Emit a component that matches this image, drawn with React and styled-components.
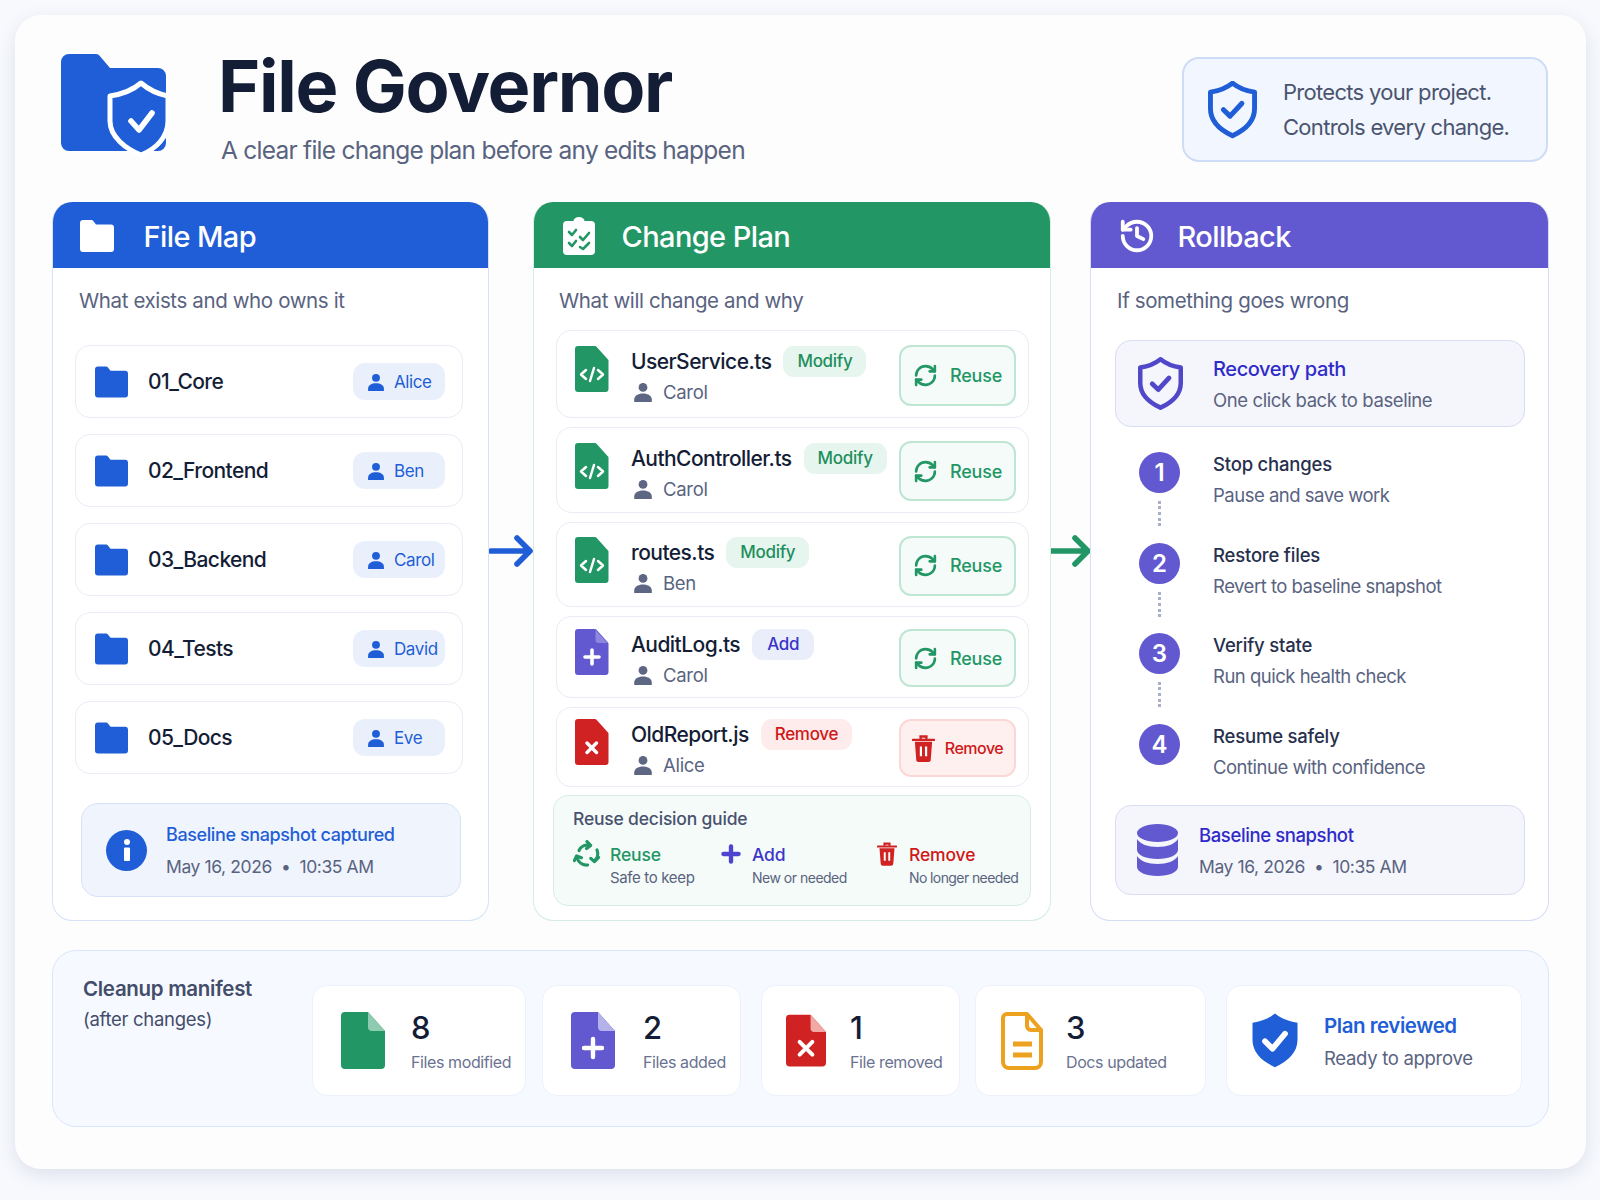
import React from 'react';
import styled, { createGlobalStyle } from 'styled-components';
import { RefreshCw, History, Plus } from 'lucide-react';

const BLUE = '#1f5ed6';
const GREEN = '#229765';
const PURPLE = '#6259d0';
const RED = '#d02222';
const INK = '#141d36';
const GREY = '#59637f';

const Global = createGlobalStyle`
  html, body { margin: 0; padding: 0; }
  body {
    background: #f7f9fd;
    font-family: Inter, "Liberation Sans", sans-serif;
    color: ${INK};
  }
  * { box-sizing: border-box; }
`;

const Page = styled.div`
  width: 1600px;
  height: 1200px;
  padding: 15px 14px 31px 15px;
`;

const Card = styled.div`
  height: 100%;
  background: #fdfdfe;
  border-radius: 26px;
  box-shadow: 0 6px 18px rgba(70, 85, 130, 0.14);
  padding: 38px 37px 0 37px;
`;

const Header = styled.header`
  display: flex;
  height: 149px;
`;

const Logo = styled.svg`
  width: 110px;
  height: 104px;
  margin: 0 0 0 8px;
  flex: none;
  overflow: visible;
`;

const TitleBlock = styled.div`
  margin-left: 48px;
  flex: 1;
`;

const Title = styled.h1`
  margin: 0;
  font-size: 72px;
  line-height: 66px;
  font-weight: 700;
  letter-spacing: -1.3px;
  color: ${INK};
`;

const Subtitle = styled.p`
  margin: 15px 0 0 3px;
  font-size: 24.5px;
  line-height: 32px;
  letter-spacing: -0.75px;
  color: ${GREY};
`;

const Promise = styled.div`
  width: 366px;
  height: 105px;
  margin: 4px 1px 0 0;
  display: flex;
  align-items: center;
  padding-left: 24px;
  gap: 26px;
  background: #f2f6fe;
  border: 2px solid #cfdcf6;
  border-radius: 17px;
  font-size: 22px;
  line-height: 35px;
  letter-spacing: -0.7px;
  color: #4a546f;
`;

const Columns = styled.div`
  display: grid;
  grid-template-columns: 437px 44px 518px 39px 459px;
  height: 719px;
`;

const Panel = styled.section`
  border: 1.5px solid ${(p) => p.$line};
  border-top: none;
  border-radius: 20px;
  overflow: hidden;
  background: #fff;
`;

const PanelHead = styled.div`
  height: 66px;
  margin: 0 -1.5px;
  background: ${(p) => p.$bg};
  color: #fff;
  display: flex;
  align-items: center;
  padding: 2px 0 0 ${(p) => p.$pad}px;
  gap: ${(p) => p.$gap}px;
  font-size: 29px;
  font-weight: 500;
  letter-spacing: -0.6px;
`;

const PanelBody = styled.div`
  padding: 21px ${(p) => p.$right}px 0 ${(p) => p.$left}px;
`;

const Lead = styled.p`
  margin: 0 0 ${(p) => p.$after}px ${(p) => p.$indent}px;
  font-size: 20.5px;
  line-height: 24px;
  letter-spacing: -0.38px;
  color: ${GREY};
`;

const FolderList = styled.div`
  display: flex;
  flex-direction: column;
  gap: 16px;
`;

const FolderRow = styled.div`
  height: 73px;
  display: flex;
  align-items: center;
  padding: 0 17px 0 19px;
  border: 1.5px solid #e9ecf6;
  border-radius: 15px;
`;

const FolderName = styled.span`
  margin-left: 20px;
  font-size: 21px;
  font-weight: 500;
  letter-spacing: -0.6px;
  flex: 1;
`;

const OwnerPill = styled.span`
  width: 92px;
  height: 37px;
  display: flex;
  align-items: center;
  gap: 9px;
  padding-left: 14px;
  background: #e9f0fc;
  border-radius: 12px;
  color: ${BLUE};
  font-size: 17px;
  letter-spacing: -0.4px;
`;

const InfoNote = styled.div`
  height: 94px;
  margin: 29px 2px 0 6px;
  display: flex;
  align-items: center;
  padding-left: 24px;
  gap: 19px;
  background: #eff4fd;
  border: 1.5px solid #d6e2f8;
  border-radius: 17px;
`;

const InfoDisc = styled.span`
  width: 41px;
  height: 41px;
  flex: none;
  border-radius: 50%;
  background: ${BLUE};
  display: flex;
  align-items: center;
  justify-content: center;
`;

const NoteTitle = styled.div`
  font-size: ${(p) => p.$size}px;
  line-height: 24px;
  font-weight: 500;
  letter-spacing: -0.4px;
  color: ${(p) => p.$color};
`;

const NoteText = styled.div`
  margin-top: ${(p) => p.$top || 8}px;
  font-size: ${(p) => p.$size || 17.5}px;
  line-height: 24px;
  letter-spacing: -0.4px;
  color: ${GREY};
`;

const NoteCopy = styled.div`
  padding-top: 2px;
`;

const Arrow = styled.svg`
  align-self: start;
  width: 100%;
  height: 34px;
  margin-top: 332px;
`;

const ChangeList = styled.div`
  display: flex;
  flex-direction: column;
  gap: 9px;
`;

const ChangeRow = styled.div`
  height: ${(p) => p.$h}px;
  display: flex;
  align-items: flex-start;
  padding: ${(p) => p.$top}px 12px 0 18px;
  border: 1.5px solid #e9ecf6;
  border-radius: 15px;
`;

const DocIcon = styled.svg`
  width: 34px;
  height: 48px;
  flex: none;
`;

const ChangeText = styled.div`
  margin-left: 22px;
  flex: 1;
`;

const NameLine = styled.div`
  display: flex;
  align-items: center;
  gap: 12px;
  height: 30px;
`;

const FileName = styled.span`
  font-size: 21px;
  font-weight: 500;
  letter-spacing: -0.55px;
`;

const Tag = styled.span`
  height: 31px;
  padding: 0 ${(p) => p.$pad || 14}px;
  display: flex;
  align-items: center;
  border-radius: 11px;
  font-size: 17px;
  font-weight: 500;
  letter-spacing: -0.3px;
  color: ${(p) => p.$color};
  background: ${(p) => p.$bg};
`;

const OwnerLine = styled.div`
  display: flex;
  align-items: center;
  gap: 10px;
  margin: 5px 0 0 2px;
  font-size: 18.5px;
  letter-spacing: -0.3px;
  color: ${GREY};
`;

const ActionButton = styled.div`
  width: 117px;
  height: ${(p) => p.$h}px;
  align-self: center;
  margin-top: ${(p) => 2 - p.$top}px;
  display: flex;
  align-items: center;
  justify-content: center;
  gap: ${(p) => p.$gap}px;
  border-radius: 12px;
  border: 2px solid ${(p) => p.$line};
  background: ${(p) => p.$bg};
  color: ${(p) => p.$color};
  font-size: ${(p) => p.$size}px;
  font-weight: 500;
  letter-spacing: ${(p) => p.$track}px;
`;

const Guide = styled.div`
  height: 111px;
  margin: 8px -2px 0 -3px;
  padding: 12px 14px 0 19px;
  background: #f5fbf8;
  border: 1.5px solid #d4eee1;
  border-radius: 15px;
`;

const GuideTitle = styled.div`
  font-size: 17.5px;
  line-height: 22px;
  font-weight: 500;
  letter-spacing: -0.2px;
  color: #48526e;
`;

const GuideGrid = styled.div`
  display: grid;
  grid-template-columns: 146px 158px 1fr;
  margin-top: 13px;
`;

const GuideItem = styled.div`
  display: grid;
  grid-template-columns: ${(p) => p.$icon}px auto;
  grid-template-rows: 22px 25px;
  align-items: center;
`;

const GuideName = styled.div`
  font-size: 17.5px;
  font-weight: 500;
  letter-spacing: -0.15px;
  color: ${(p) => p.$color};
`;

const GuideHint = styled.div`
  grid-column: 2;
  font-size: ${(p) => p.$size}px;
  letter-spacing: ${(p) => p.$track}px;
  white-space: nowrap;
  color: ${GREY};
`;

const RecoveryBox = styled.div`
  height: ${(p) => p.$h}px;
  display: flex;
  align-items: center;
  padding-left: ${(p) => p.$pad}px;
  gap: ${(p) => p.$gap}px;
  background: #f5f5fc;
  border: 1.5px solid #d9dcf3;
  border-radius: 16px;
`;

const StepList = styled.div`
  margin: 25px 0 0 24px;
`;

const Step = styled.div`
  height: 90.5px;
  display: grid;
  grid-template-columns: 74px 1fr;
  &:last-child {
    height: 81px;
  }
`;

const StepMarker = styled.div`
  width: 41px;
  display: flex;
  flex-direction: column;
  align-items: center;
`;

const StepDisc = styled.div`
  width: 41px;
  height: 41px;
  border-radius: 50%;
  background: ${PURPLE};
  color: #fff;
  font-size: 24px;
  font-weight: 600;
  display: flex;
  align-items: center;
  justify-content: center;
`;

const StepDots = styled.div`
  width: 0;
  height: 25px;
  margin-top: 8px;
  border-left: 3.5px dotted #a8aecb;
`;

const StepTitle = styled.div`
  font-size: 18.5px;
  line-height: 24px;
  font-weight: 500;
  letter-spacing: -0.2px;
  color: #27304d;
`;

const StepText = styled.div`
  margin-top: 7px;
  font-size: 18.5px;
  line-height: 24px;
  letter-spacing: -0.5px;
  color: ${GREY};
`;

const Manifest = styled.section`
  height: 177px;
  margin-top: 29px;
  padding: 34px 0 0 30px;
  display: flex;
  background: #f6f9ff;
  border: 1.5px solid #d9e6fb;
  border-radius: 24px;
`;

const ManifestLabel = styled.div`
  width: 229px;
  flex: none;
  margin-top: -11px;
  font-size: 20.5px;
  line-height: 30px;
  letter-spacing: -0.3px;
  font-weight: 600;
  color: #434d6a;
  small {
    display: block;
    font-size: 18.5px;
    font-weight: 400;
  }
`;

const StatCard = styled.div`
  width: ${(p) => p.$w}px;
  height: 111px;
  margin-left: ${(p) => p.$ml}px;
  padding-left: ${(p) => p.$pad}px;
  display: flex;
  align-items: center;
  gap: ${(p) => p.$gap}px;
  background: #fff;
  border: 1.5px solid #ecf1fb;
  border-radius: 15px;
`;

const StatNumber = styled.div`
  font-size: 31px;
  line-height: 38px;
  font-weight: 500;
`;

const StatLabel = styled.div`
  margin-top: 4px;
  font-size: 16px;
  line-height: 22px;
  letter-spacing: -0.4px;
  color: #6a7390;
`;

const ReviewCopy = styled.div`
  padding-top: 2px;
`;

const ReviewTitle = styled.div`
  font-size: 20.5px;
  line-height: 28px;
  font-weight: 600;
  letter-spacing: -0.45px;
  color: ${BLUE};
`;

const ReviewText = styled.div`
  margin-top: 5px;
  font-size: 18.5px;
  line-height: 26px;
  letter-spacing: -0.3px;
  color: ${GREY};
`;

const SHIELD = 'M12 1.5C14.6 3.6 17.6 4.7 21 5.2V12C21 17 17.4 20.5 12 23C6.6 20.5 3 17 3 12V5.2C6.4 4.7 9.4 3.6 12 1.5Z';

const ShieldOutline = ({ color, w, h }) => (
  <svg width={w} height={h} viewBox="2 1 20 23" fill="none" style={{ flex: 'none' }}>
    <path d={SHIELD} stroke={color} strokeWidth="2" strokeLinejoin="round" />
    <path d="M8.3 12.4l2.7 2.6 4.8-5.2" stroke={color} strokeWidth="2.1" strokeLinecap="round" strokeLinejoin="round" />
  </svg>
);

const Folder = ({ color = BLUE, w = 33, h = 32 }) => (
  <svg width={w} height={h} viewBox="0 0 34 32" style={{ flex: 'none' }}>
    <path d="M0 3a3 3 0 0 1 3-3h8.5a2 2 0 0 1 1.6.8L16 4.5h15a3 3 0 0 1 3 3V29a3 3 0 0 1-3 3H3a3 3 0 0 1-3-3Z" fill={color} />
  </svg>
);

const Person = ({ color, size = 20 }) => (
  <svg width={size} height={size} viewBox="0 0 20 20" style={{ flex: 'none' }}>
    <circle cx="10" cy="5.4" r="4.4" fill={color} />
    <path d="M1.2 20v-2.6C1.2 13.6 5 11.4 10 11.4s8.8 2.2 8.8 6V20Z" fill={color} />
  </svg>
);

const FILE_SHAPE = 'M3 0H20a2 2 0 0 1 1.5.7L33 13.5a2 2 0 0 1 .5 1.3V43a3 3 0 0 1-3 3H3a3 3 0 0 1-3-3V3a3 3 0 0 1 3-3Z';

const FileCode = () => (
  <DocIcon viewBox="0 0 34 48">
    <path d={FILE_SHAPE} fill={GREEN} />
    <path d="M11 24l-5 4.5 5 4.5M23 24l5 4.5-5 4.5M19 22l-4 13" stroke="#fff" strokeWidth="2.5" fill="none" strokeLinecap="round" strokeLinejoin="round" />
  </DocIcon>
);

const FileAdd = () => (
  <DocIcon viewBox="0 0 34 48">
    <path d={FILE_SHAPE} fill={PURPLE} />
    <path d="M20.5 1l12 13h-9a3 3 0 0 1-3-3Z" fill="#8d87e0" />
    <path d="M17 21v14M10 28h14" stroke="#fff" strokeWidth="3.6" strokeLinecap="round" />
  </DocIcon>
);

const FileRemove = () => (
  <DocIcon viewBox="0 0 34 48">
    <path d={FILE_SHAPE} fill={RED} />
    <path d="M12 24l9.5 9.5M21.5 24L12 33.5" stroke="#fff" strokeWidth="3.4" strokeLinecap="round" />
  </DocIcon>
);

const Trash = ({ w, h }) => (
  <svg width={w} height={h} viewBox="0 0 24 28" style={{ flex: 'none' }}>
    <path d="M9 3V1.5h6V3M1 5h22" stroke={RED} strokeWidth="2.6" fill="none" strokeLinecap="round" />
    <path d="M3 7h18l-1.4 18.2A2.6 2.6 0 0 1 17 28H7a2.6 2.6 0 0 1-2.6-2.8Z" fill={RED} />
    <path d="M9.3 12v10M14.7 12v10" stroke="#fff" strokeWidth="2.3" />
  </svg>
);

const ReuseCycle = () => (
  <svg width="28" height="28" viewBox="0 0 28 28" fill="none" stroke={GREEN} strokeWidth="3.2" strokeLinecap="round" strokeLinejoin="round">
    <path d="M6 10.5C7.8 6.6 11.8 4.6 16 5.4" />
    <path d="M14 1.6l3.6 3.8-4 3.2" />
    <path d="M24 10c1.6 4 .6 8.4-2.8 11" />
    <path d="M25.6 17.4l-4.2 4.2-3.6-3.2" />
    <path d="M14.6 25C10 25.4 5.6 22.6 4 18" />
    <path d="M1.4 20.6L3.6 16l4.8 1.8" />
  </svg>
);

const StatDoc = ({ fill, fold, w, children }) => (
  <svg width={w} height="58" viewBox="0 0 44 58" style={{ flex: 'none' }}>
    <path d="M4 0H27L44 19V53a4 4 0 0 1-4 4H4a4 4 0 0 1-4-4V4a4 4 0 0 1 4-4Z" fill={fill} />
    <path d="M27 0L44 19H31a4 4 0 0 1-4-4Z" fill={fold} />
    {children}
  </svg>
);

const folders = [
  ['01_Core', 'Alice'],
  ['02_Frontend', 'Ben'],
  ['03_Backend', 'Carol'],
  ['04_Tests', 'David'],
  ['05_Docs', 'Eve'],
];

const MODIFY = { label: 'Modify', color: '#1d8f5d', bg: '#e6f5ee' };
const ADD = { label: 'Add', color: '#3b35c9', bg: '#eaeefb' };
const REMOVE = { label: 'Remove', color: '#d01818', bg: '#fdeceb' };

const changes = [
  { name: 'UserService.ts', owner: 'Carol', tag: MODIFY, icon: <FileCode />, h: 88, btn: 61, top: 15 },
  { name: 'AuthController.ts', owner: 'Carol', tag: MODIFY, icon: <FileCode />, h: 86, btn: 60, top: 15 },
  { name: 'routes.ts', owner: 'Ben', tag: MODIFY, icon: <FileCode />, h: 85, btn: 60, top: 14 },
  { name: 'AuditLog.ts', owner: 'Carol', tag: ADD, icon: <FileAdd />, h: 82, btn: 58, top: 12 },
  { name: 'OldReport.js', owner: 'Alice', tag: REMOVE, icon: <FileRemove />, h: 80, btn: 58, top: 11, remove: true },
];

const steps = [
  ['Stop changes', 'Pause and save work'],
  ['Restore files', 'Revert to baseline snapshot'],
  ['Verify state', 'Run quick health check'],
  ['Resume safely', 'Continue with confidence'],
];

export default function App() {
  return (
    <Page>
      <Global />
      <Card>
        <Header>
          <Logo viewBox="0 0 110 104">
            <path d="M1 9a8 8 0 0 1 8-8H36a5 5 0 0 1 4 2.2L50 15H98a8 8 0 0 1 8 8V90a8 8 0 0 1-8 8H9a8 8 0 0 1-8-8Z" fill={BLUE} />
            <path d="M81 30C89 37 98 41 108 43V68C108 84 96 96 81 102C66 96 50 84 50 68V43C63 41 73 37 81 30Z" fill={BLUE} stroke="#fff" strokeWidth="5" strokeLinejoin="round" />
            <path d="M71 68l8 9 13-17" stroke="#fff" strokeWidth="5.6" fill="none" strokeLinecap="round" strokeLinejoin="round" />
          </Logo>
          <TitleBlock>
            <Title>File Governor</Title>
            <Subtitle>A clear file change plan before any edits happen</Subtitle>
          </TitleBlock>
          <Promise>
            <ShieldOutline color={BLUE} w={49} h={58} />
            <div>
              Protects your project.
              <br />
              Controls every change.
            </div>
          </Promise>
        </Header>

        <Columns>
          <Panel $line="#d5e2f8">
            <PanelHead $bg={BLUE} $pad={27} $gap={29}>
              <Folder color="#fff" w={36} h={32} />
              File Map
            </PanelHead>
            <PanelBody $left={22} $right={25}>
              <Lead $after={32} $indent={4}>What exists and who owns it</Lead>
              <FolderList>
                {folders.map(([name, owner]) => (
                  <FolderRow key={name}>
                    <Folder />
                    <FolderName>{name}</FolderName>
                    <OwnerPill>
                      <Person color={BLUE} size={18} />
                      {owner}
                    </OwnerPill>
                  </FolderRow>
                ))}
              </FolderList>
              <InfoNote>
                <InfoDisc>
                  <svg width="8" height="22" viewBox="0 0 8 22">
                    <circle cx="4" cy="3" r="3" fill="#fff" />
                    <rect x="1" y="8.5" width="6" height="13.5" rx="1" fill="#fff" />
                  </svg>
                </InfoDisc>
                <NoteCopy>
                  <NoteTitle $color={BLUE} $size={18}>Baseline snapshot captured</NoteTitle>
                  <NoteText>May 16, 2026 &nbsp;•&nbsp; 10:35 AM</NoteText>
                </NoteCopy>
              </InfoNote>
            </PanelBody>
          </Panel>

          <Arrow viewBox="0 0 44 34">
            <path d="M2 17H40M28 4l13 13-13 13" stroke={BLUE} strokeWidth="5.6" fill="none" strokeLinecap="round" strokeLinejoin="round" />
          </Arrow>

          <Panel $line="#d4eee1">
            <PanelHead $bg={GREEN} $pad={30} $gap={27}>
              <svg width="32" height="38" viewBox="0 0 32 38" style={{ flex: 'none' }}>
                <path d="M4 4h6.5a5.5 4 0 0 1 11 0H28a4 4 0 0 1 4 4v26a4 4 0 0 1-4 4H4a4 4 0 0 1-4-4V8a4 4 0 0 1 4-4Z" fill="#fff" />
                <path d="M6 15l3 3 4-5M6 26l3 3 4-5" stroke={GREEN} strokeWidth="2.6" fill="none" strokeLinecap="round" strokeLinejoin="round" />
                <path d="M17 20l3 3 6-7M17 30l3 2 6-6" stroke={GREEN} strokeWidth="2.6" fill="none" strokeLinecap="round" strokeLinejoin="round" />
              </svg>
              Change Plan
            </PanelHead>
            <PanelBody $left={22} $right={21}>
              <Lead $after={17} $indent={3}>What will change and why</Lead>
              <ChangeList>
                {changes.map((c) => (
                  <ChangeRow key={c.name} $h={c.h} $top={c.top}>
                    {c.icon}
                    <ChangeText>
                      <NameLine>
                        <FileName>{c.name}</FileName>
                        <Tag $color={c.tag.color} $bg={c.tag.bg} $pad={c.tag === ADD ? 15 : 14}>{c.tag.label}</Tag>
                      </NameLine>
                      <OwnerLine>
                        <Person color="#5d6783" />
                        {c.owner}
                      </OwnerLine>
                    </ChangeText>
                    {c.remove ? (
                      <ActionButton $h={c.btn} $top={c.top} $line="#fbd7d5" $bg="#fdf0ef" $color="#d01818" $size={16} $track={-0.5} $gap={10}>
                        <Trash w={23} h={27} />
                        Remove
                      </ActionButton>
                    ) : (
                      <ActionButton $h={c.btn} $top={c.top} $line="#bfe6d3" $bg="#f4fbf8" $color={GREEN} $size={18} $track={-0.2} $gap={12}>
                        <RefreshCw size={25} strokeWidth={2.5} />
                        Reuse
                      </ActionButton>
                    )}
                  </ChangeRow>
                ))}
              </ChangeList>
              <Guide>
                <GuideTitle>Reuse decision guide</GuideTitle>
                <GuideGrid>
                  <GuideItem $icon={37}>
                    <ReuseCycle />
                    <GuideName $color={GREEN}>Reuse</GuideName>
                    <GuideHint $size={15} $track={-0.35}>Safe to keep</GuideHint>
                  </GuideItem>
                  <GuideItem $icon={33}>
                    <Plus size={26} strokeWidth={4} color="#4c44cf" style={{ marginLeft: -1 }} />
                    <GuideName $color="#3b35c9">Add</GuideName>
                    <GuideHint $size={14} $track={-0.5}>New or needed</GuideHint>
                  </GuideItem>
                  <GuideItem $icon={32}>
                    <Trash w={20} h={24} />
                    <GuideName $color="#d01818">Remove</GuideName>
                    <GuideHint $size={14} $track={-0.6}>No longer needed</GuideHint>
                  </GuideItem>
                </GuideGrid>
              </Guide>
            </PanelBody>
          </Panel>

          <Arrow viewBox="0 0 39 34">
            <path d="M1 17H36M24 4l13 13-13 13" stroke={GREEN} strokeWidth="5.6" fill="none" strokeLinecap="round" strokeLinejoin="round" />
          </Arrow>

          <Panel $line="#d6dcf5">
            <PanelHead $bg={PURPLE} $pad={28} $gap={22}>
              <History size={38} strokeWidth={2.4} />
              Rollback
            </PanelHead>
            <PanelBody $left={24} $right={23}>
              <Lead $after={27} $indent={2}>If something goes wrong</Lead>
              <RecoveryBox $h={87} $pad={22} $gap={30}>
                <ShieldOutline color="#5048c8" w={45} h={54} />
                <NoteCopy>
                  <NoteTitle $color="#2f2bc9" $size={20}>Recovery path</NoteTitle>
                  <NoteText $top={7} $size={18.5}>One click back to baseline</NoteText>
                </NoteCopy>
              </RecoveryBox>
              <StepList>
                {steps.map(([title, text], i) => (
                  <Step key={title}>
                    <StepMarker>
                      <StepDisc>{i + 1}</StepDisc>
                      {i < steps.length - 1 && <StepDots />}
                    </StepMarker>
                    <div>
                      <StepTitle>{title}</StepTitle>
                      <StepText>{text}</StepText>
                    </div>
                  </Step>
                ))}
              </StepList>
              <RecoveryBox $h={90} $pad={21} $gap={21}>
                <svg width="41" height="52" viewBox="0 0 41 52" style={{ flex: 'none' }}>
                  <ellipse cx="20.5" cy="9" rx="20.5" ry="9" fill={PURPLE} />
                  <path d="M0 15c3 5 11 8 20.5 8S38 20 41 15V26c0 5-9 9-20.5 9S0 31 0 26Z" fill={PURPLE} />
                  <path d="M0 32c3 5 11 8 20.5 8S38 37 41 32V43c0 5-9 9-20.5 9S0 48 0 43Z" fill={PURPLE} />
                </svg>
                <NoteCopy>
                  <NoteTitle $color="#2f2bc9" $size={18.5}>Baseline snapshot</NoteTitle>
                  <NoteText>May 16, 2026 &nbsp;•&nbsp; 10:35 AM</NoteText>
                </NoteCopy>
              </RecoveryBox>
            </PanelBody>
          </Panel>
        </Columns>

        <Manifest>
          <ManifestLabel>
            Cleanup manifest
            <small>(after changes)</small>
          </ManifestLabel>
          <StatCard $w={214} $ml={0} $pad={28} $gap={26}>
            <StatDoc fill={GREEN} fold="#8fcbb0" w={44} />
            <div>
              <StatNumber>8</StatNumber>
              <StatLabel>Files modified</StatLabel>
            </div>
          </StatCard>
          <StatCard $w={199} $ml={16} $pad={28} $gap={28}>
            <StatDoc fill={PURPLE} fold="#b5b1ea" w={44}>
              <path d="M22 27v18M13 36h18" stroke="#fff" strokeWidth="4.4" strokeLinecap="round" />
            </StatDoc>
            <div>
              <StatNumber>2</StatNumber>
              <StatLabel>Files added</StatLabel>
            </div>
          </StatCard>
          <StatCard $w={199} $ml={20} $pad={24} $gap={24}>
            <StatDoc fill={RED} fold="#f0a9a5" w={40}>
              <path d="M15 30l14 14M29 30L15 44" stroke="#fff" strokeWidth="4.4" strokeLinecap="round" />
            </StatDoc>
            <div>
              <StatNumber>1</StatNumber>
              <StatLabel>File removed</StatLabel>
            </div>
          </StatCard>
          <StatCard $w={231} $ml={15} $pad={25} $gap={23}>
            <svg width="42" height="58" viewBox="0 0 42 58" fill="none" style={{ flex: 'none' }}>
              <path d="M6 2H26L40 18V50a6 6 0 0 1-6 6H8a6 6 0 0 1-6-6V6a4 4 0 0 1 4-4Z" stroke="#eda21f" strokeWidth="4" strokeLinejoin="round" />
              <path d="M26 3V14a4 4 0 0 0 4 4H39" stroke="#eda21f" strokeWidth="4" />
              <path d="M12 32H31M12 43H31" stroke="#eda21f" strokeWidth="5" />
            </svg>
            <div>
              <StatNumber>3</StatNumber>
              <StatLabel>Docs updated</StatLabel>
            </div>
          </StatCard>
          <StatCard $w={296} $ml={20} $pad={23} $gap={24}>
            <svg width="50" height="58" viewBox="2 1 20 23" style={{ flex: 'none' }}>
              <path d={SHIELD} fill={BLUE} />
              <path d="M8 12.6l3 3 5-6" stroke="#fff" strokeWidth="2.3" fill="none" strokeLinecap="round" strokeLinejoin="round" />
            </svg>
            <ReviewCopy>
              <ReviewTitle>Plan reviewed</ReviewTitle>
              <ReviewText>Ready to approve</ReviewText>
            </ReviewCopy>
          </StatCard>
        </Manifest>
      </Card>
    </Page>
  );
}
